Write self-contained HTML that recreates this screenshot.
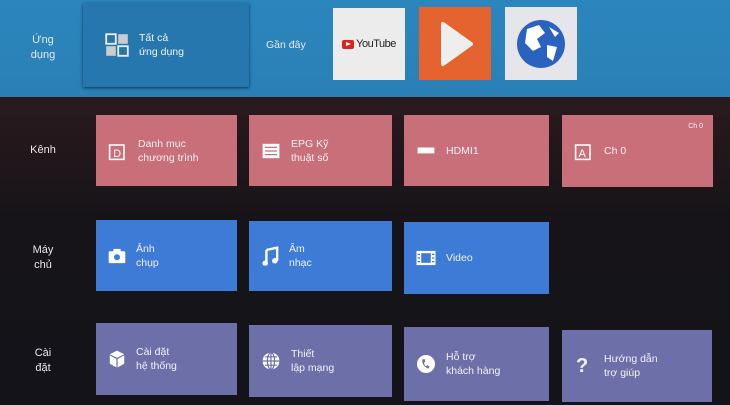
<!DOCTYPE html>
<html><head><meta charset="utf-8"><style>
*{margin:0;padding:0;box-sizing:border-box}
body{width:730px;height:405px;overflow:hidden;background:#1b1619;font-family:"Liberation Sans","Noto Sans CJK SC",sans-serif;color:#eef;position:relative}
.top{position:absolute;left:0;top:0;width:730px;height:97px;background:linear-gradient(#2b86bd,#2a80b6)}
.bot{position:absolute;left:0;top:97px;width:730px;height:308px;background:linear-gradient(#2a1a1e,#161418 40%,#14131a)}
.a{position:absolute}
.lbl{position:absolute;font-size:11px;color:#e8e8ee;text-align:center;line-height:15px}
.t{position:absolute;display:flex;align-items:center;padding-left:14px;font-size:10.5px;line-height:14px;color:#f2f2f6}
.t svg{margin-right:12px;flex:none;transform:scale(1.2)}
.r{background:#c86f7a}.b{background:#3d7bd6}.p{background:#6d70a8}
</style></head><body>
<div class="top"></div><div class="bot"></div>
<div class="lbl" style="left:28px;top:33px;width:30px">Ứng<br>dụng</div>
<div class="t" style="left:83px;top:3px;width:166px;height:84px;background:#2677ad;box-shadow:0 1px 3px #135;padding-left:24px">
<svg width="20" height="20" viewBox="0 0 20 20"><rect x="1" y="1" width="8" height="8" fill="none" stroke="#eee" stroke-width="1.5"/><rect x="11" y="1" width="8" height="8" fill="#ccc"/><rect x="1" y="11" width="8" height="8" fill="#ccc"/><rect x="11" y="11" width="8" height="8" fill="none" stroke="#eee" stroke-width="1.5"/></svg>Tất cả<br>ứng dụng</div>
<div class="lbl" style="left:266px;top:38px;font-size:10.5px">Gần đây</div>
<div class="a" style="left:333px;top:8px;width:72px;height:72px;background:#ececec;display:flex;align-items:center;justify-content:center;font-size:11px;color:#222;letter-spacing:-.5px"><span style="display:inline-block;width:12px;height:9px;background:#d22;border-radius:2px;margin-right:2px;position:relative"><span style="position:absolute;left:4px;top:2px;border-left:5px solid #fff;border-top:2.5px solid transparent;border-bottom:2.5px solid transparent"></span></span>YouTube</div>
<div class="a" style="left:419px;top:7px;width:72px;height:73px;background:#e4632e"><svg width="72" height="73"><path d="M24 17 L52 37 L24 57 Z" fill="#eee" stroke="#eee" stroke-linejoin="round" stroke-width="4"/></svg></div>
<div class="a" style="left:505px;top:7px;width:72px;height:73px;background:#e6e6ea"><svg width="72" height="73"><circle cx="36" cy="37" r="24" fill="#2a62c0"/><path d="M22 22 L34 18 L40 26 L32 32 L36 40 L28 44 L20 36 Z M42 38 L52 40 L48 54 L42 50 Z M44 20 L54 26 L50 30 Z" fill="#fff"/></svg></div>

<div class="lbl" style="left:28px;top:143px;width:30px">Kênh</div>
<div class="t r" style="left:96px;top:115px;width:141px;height:71px"><svg width="16" height="16"><rect x="1" y="3" width="12" height="12" fill="none" stroke="#fff" stroke-width="1.3"/><text x="4" y="13" font-size="9" fill="#fff" font-family="Liberation Sans">D</text></svg>Danh mục<br>chương trình</div>
<div class="t r" style="left:249px;top:115px;width:143px;height:71px"><svg width="16" height="14"><rect x="1" y="1" width="14" height="12" fill="#fff"/><path d="M3 4h10M3 7h10M3 10h10" stroke="#c96f7a"/></svg>EPG Kỹ<br>thuật số</div>
<div class="t r" style="left:404px;top:115px;width:145px;height:71px"><svg width="16" height="6"><rect x="1" y="0" width="14" height="5" fill="#fff"/></svg>HDMI1</div>
<div class="t r" style="left:562px;top:115px;width:151px;height:72px"><svg width="16" height="16"><rect x="1" y="3" width="12" height="12" fill="none" stroke="#fff" stroke-width="1.3"/><text x="3.5" y="13" font-size="9" fill="#fff" font-family="Liberation Sans">A</text></svg>Ch 0<span style="position:absolute;right:10px;top:5px;font-size:7px">Ch 0</span></div>

<div class="lbl" style="left:28px;top:243px;width:30px">Máy<br>chủ</div>
<div class="t b" style="left:96px;top:220px;width:141px;height:71px"><svg width="14" height="13"><rect x="0" y="3" width="14" height="10" rx="1" fill="#fff"/><rect x="4" y="1" width="6" height="3" fill="#fff"/><circle cx="7" cy="8" r="2.5" fill="#3d7bd8"/></svg>Ảnh<br>chụp</div>
<div class="t b" style="left:249px;top:221px;width:143px;height:70px"><svg width="14" height="16"><path d="M4 3 L13 1 L13 12 M4 3 L4 14" stroke="#fff" stroke-width="2" fill="none"/><circle cx="3" cy="14" r="2.3" fill="#fff"/><circle cx="11" cy="12" r="2.3" fill="#fff"/></svg>Âm<br>nhạc</div>
<div class="t b" style="left:404px;top:222px;width:145px;height:72px"><svg width="16" height="12"><rect x="0" y="0" width="16" height="12" fill="#fff"/><rect x="4" y="2" width="8" height="8" fill="#3d7bd8"/><path d="M1 3h2M1 6h2M1 9h2M13 3h2M13 6h2M13 9h2" stroke="#3d7bd8"/></svg>Video</div>

<div class="lbl" style="left:28px;top:346px;width:30px">Cài<br>đặt</div>
<div class="t p" style="left:96px;top:323px;width:141px;height:72px"><svg width="14" height="16"><path d="M7 1 L13 4 L7 7 L1 4Z M1 5 L6.5 8 L6.5 15 L1 12Z M7.5 8 L13 5 L13 12 L7.5 15Z" fill="#fff"/></svg>Cài đặt<br>hệ thống</div>
<div class="t p" style="left:249px;top:325px;width:143px;height:72px"><svg width="16" height="16"><circle cx="8" cy="8" r="7" fill="#fff"/><path d="M1 8h14M8 1v14M3 4.5h10M3 11.5h10" stroke="#6d70a9"/><ellipse cx="8" cy="8" rx="3" ry="7" fill="none" stroke="#6d70a9"/></svg>Thiết<br>lập mạng</div>
<div class="t p" style="left:404px;top:327px;width:145px;height:74px"><svg width="16" height="16"><circle cx="8" cy="8" r="7.5" fill="#fff"/><path d="M5 4 Q4 9 10 12 L11 10 L9 9 L8 10 Q6 8 6.5 6.5 L7.5 6 L7 4Z" fill="#6d70a9"/></svg>Hỗ trợ<br>khách hàng</div>
<div class="t p" style="left:562px;top:330px;width:150px;height:72px"><span style="font-size:20px;font-weight:bold;margin-right:12px;width:16px">?</span>Hướng dẫn<br>trợ giúp</div>
</body></html>
